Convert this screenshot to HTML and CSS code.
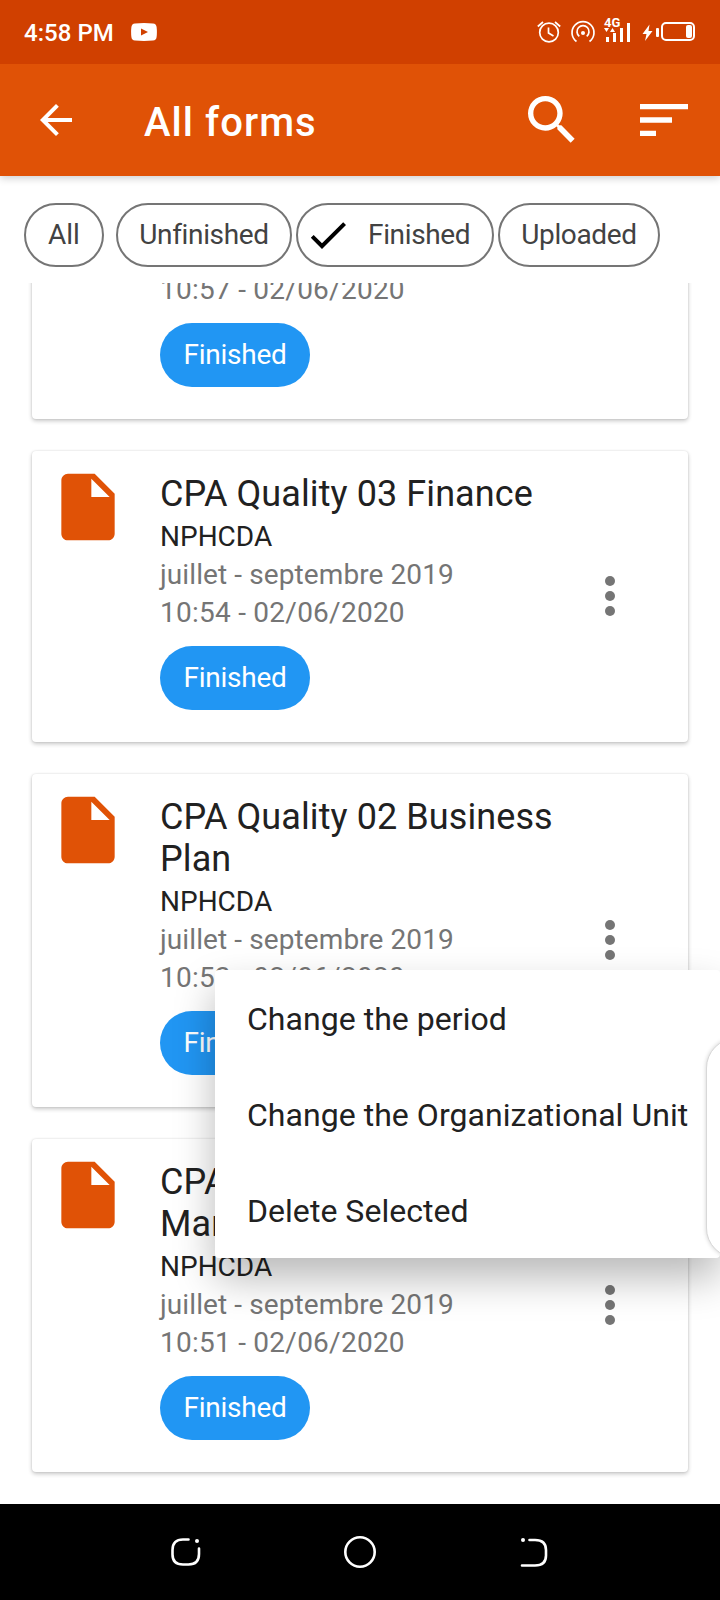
FILE: index.html
```html
<!DOCTYPE html>
<html lang="en">
<head>
<meta charset="utf-8">
<title>All forms</title>
<link rel="stylesheet" href="styles.css">
</head>
<body>
<svg class="defs" width="0" height="0">
  <symbol id="doc" viewBox="0 0 24 24"><path d="M6 2c-1.1 0-1.99.9-1.99 2L4 20c0 1.1.89 2 1.99 2H18c1.1 0 2-.9 2-2V8l-6-6H6zm7 7V3.5L18.5 9H13z"/></symbol>
  <symbol id="more" viewBox="0 0 10 40"><circle cx="5" cy="5" r="5"/><circle cx="5" cy="20" r="5"/><circle cx="5" cy="35" r="5"/></symbol>
</svg>
<div class="screen">
  <header class="status">
    <span class="clock">4:58 PM</span>
    <svg class="tube" viewBox="0 0 26 18"><path fill="#fff" d="M4 .4Q13-.4 22 .4 25.300.8 25.600 4 26.200 9 25.600 14 25.300 17.200 22 17.600 13 18.400 4 17.600.7 17.200.4 14-.2 9 .4 4 .7.8 4 .4z"/><path fill="#d04000" d="M10 5.600v6.800l7-3.400z"/></svg>
    <span class="spacer"></span>
    <svg class="tray" viewBox="530 8 170 48" fill="none" stroke="#fff" stroke-width="1.700">
      <circle cx="549" cy="32.500" r="9.300"/>
      <path d="M548.500 27.500v5.500l5 3M537.800 26.500l5.200-4.500M560.200 26.500l-5.200-4.500"/>
      <path d="M576.500 41.500a11 11 0 1 1 13 0M579.300 36.300a6 6 0 1 1 7.400 0"/>
      <circle cx="583" cy="33" r="2" fill="#fff" stroke="none"/>
      <g fill="#fff" stroke="none">
        <path d="M606 37h3v5h-3zM613 33h3v9h-3zM620 28h3v14h-3zM627 23h3v19h-3zM604 28h5l-2.500 4zM610 32h5l-2.500-4z"/>
        <path d="M649.500 24.500l-7 9.500h4l-1.500 7 7.500-10h-4z"/>
        <rect x="656" y="28" width="3" height="9" rx="1"/>
        <rect x="686" y="25" width="6" height="13" rx="2"/>
      </g>
      <text x="604" y="27" class="net">4G</text>
      <rect x="662" y="23" width="32" height="17" rx="4" stroke-width="2"/>
    </svg>
  </header>

  <div class="appbar">
    <svg class="back" viewBox="0 0 24 24"><path d="M20 11H7.830l5.590-5.590L12 4l-8 8 8 8 1.410-1.410L7.830 13H20v-2z"/></svg>
    <h1>All forms</h1>
    <span class="spacer"></span>
    <svg class="action" viewBox="0 0 24 24"><path d="M15.500 14h-.79l-.28-.27A6.471 6.471 0 0 0 16 9.500 6.500 6.500 0 1 0 9.500 16c1.610 0 3.090-.59 4.230-1.570l.27.28v.79l5 4.990L20.490 19l-4.990-5zm-6 0C7.010 14 5 11.990 5 9.500S7.010 5 9.500 5 14 7.010 14 9.500 11.990 14 9.500 14z"/></svg>
    <svg class="action" viewBox="0 0 24 24"><path d="M3 18h6v-2H3v2zM3 6v2h18V6H3zm0 7h12v-2H3v2z"/></svg>
  </div>

  <nav class="filters">
    <span class="filter filter-all">All</span>
    <span class="filter filter-unfinished">Unfinished</span>
    <span class="filter filter-finished"><svg viewBox="0 0 24 24"><path d="M9 16.170L4.830 12l-1.420 1.410L9 19 21 7l-1.410-1.410z"/></svg>Finished</span>
    <span class="filter filter-uploaded">Uploaded</span>
  </nav>

  <main class="list">
    <article class="card">
      <svg class="doc"><use href="#doc"/></svg>
      <div class="info"><h2>CPA Quality 04 Finance</h2><p class="org">NPHCDA</p><p class="period">juillet - septembre 2019</p><p>10:57 - 02/06/2020</p><span class="badge">Finished</span></div>
    </article>
    <article class="card">
      <svg class="doc"><use href="#doc"/></svg>
      <div class="info"><h2>CPA Quality 03 Finance</h2><p class="org">NPHCDA</p><p class="period">juillet - septembre 2019</p><p>10:54 - 02/06/2020</p><span class="badge">Finished</span></div>
      <svg class="more"><use href="#more"/></svg>
    </article>
    <article class="card">
      <svg class="doc"><use href="#doc"/></svg>
      <div class="info"><h2>CPA Quality 02 Business Plan</h2><p class="org">NPHCDA</p><p class="period">juillet - septembre 2019</p><p>10:53 - 02/06/2020</p><span class="badge">Finished</span></div>
      <svg class="more"><use href="#more"/></svg>
    </article>
    <article class="card">
      <svg class="doc"><use href="#doc"/></svg>
      <div class="info"><h2>CPA Quality 01 Management</h2><p class="org">NPHCDA</p><p class="period">juillet - septembre 2019</p><p>10:51 - 02/06/2020</p><span class="badge">Finished</span></div>
      <svg class="more"><use href="#more"/></svg>
    </article>
  </main>

  <footer class="navbar">
    <svg viewBox="0 0 32 32"><path d="M18.500 3.500H13Q2.500 3.500 2.500 14v4.500Q2.500 28.500 13 28.500h5.500Q29 28.500 29 18v-5.500"/><circle cx="27" cy="5" r="2"/></svg>
    <svg viewBox="0 0 32 32"><circle cx="16" cy="16" r="14.700" fill="none"/></svg>
    <svg viewBox="0 0 32 32"><path d="M11.500 4H17Q28 4 28 14v5.500Q28 29.500 17 29.500H4"/><circle cx="5" cy="4" r="2"/></svg>
  </footer>

  <div class="menu">
    <div class="menu-item">Change the period</div>
    <div class="menu-item">Change the Organizational Unit</div>
    <div class="menu-item">Delete Selected</div>
  </div>
  <div class="edge-panel"></div>
</div>
</body>
</html>
```
FILE: styles.css
```css
* { box-sizing: border-box; margin: 0; padding: 0; }
body { font-family: Roboto, sans-serif; background: #fff; }
.defs { position: absolute; }
.screen { position: relative; width: 720px; height: 1600px; display: flex; flex-direction: column; overflow: hidden; background: #fff; }
.spacer { flex: 1; }

.status { flex: none; height: 64px; background: #d04000; display: flex; align-items: center; padding: 0 20px 0 24px; z-index: 2; }
.clock { padding-top: 2px; font-size: 24px; font-weight: 500; line-height: 28px; color: #fff; letter-spacing: .05px; }
.tube { width: 26px; height: 18px; margin-left: 17px; }
.tray { width: 170px; height: 48px; }
.net { font-family: Roboto, sans-serif; font-size: 13px; font-weight: 700; fill: #fff; stroke: none; }

.appbar { flex: none; height: 112px; background: #e05206; display: flex; align-items: center; padding: 0 24px 0 32px; box-shadow: 0 2px 8px rgba(0,0,0,.2); z-index: 1; }
.appbar svg { fill: #fff; }
.appbar h1 { margin-left: 64px; padding-top: 5px; font-size: 40px; font-weight: 500; color: #fff; line-height: 48px; letter-spacing: 1.050px; }
.back { width: 48px; height: 48px; }
.action { width: 64px; height: 64px; margin-left: 48px; }

.filters { flex: none; height: 107px; display: flex; padding: 27px 24px 0; }
.filter { flex: none; height: 64px; border: 2px solid #757575; border-radius: 32px; font-size: 28px; line-height: 60px; letter-spacing: -.35px; color: #424242; display: flex; justify-content: center; }
.filter-all { width: 80px; margin-right: 12px; letter-spacing: 0; }
.filter-unfinished { width: 176px; margin-right: 4px; }
.filter-finished { width: 198px; margin-right: 4px; justify-content: flex-start; padding-left: 6px; }
.filter-finished svg { width: 48px; height: 48px; margin: 6px 16px 0 0; fill: #000; }
.filter-uploaded { width: 162px; }

.list { flex: 1; min-height: 0; overflow: hidden; display: flex; flex-direction: column; gap: 32px; padding: 0 32px; }
.card { flex: none; display: flex; padding: 22px 72px 32px 16px; background: #fff; border-radius: 4px; box-shadow: 0 2px 4px rgba(0,0,0,.22), 0 0 2px rgba(0,0,0,.12); }
.card:first-child { margin-top: -155px; }
.doc { width: 80px; height: 80px; margin-top: -6px; fill: #e05206; }
.info { width: 400px; margin-left: 32px; }
.info h2 { font-size: 36px; font-weight: 400; line-height: 42px; color: #212121; margin-bottom: 3px; letter-spacing: .09px; }
.info p { font-size: 28px; line-height: 38px; color: #757575; letter-spacing: .25px; }
.info .org { color: #212121; letter-spacing: 0; }
.info .period { letter-spacing: .1px; }
.badge { display: block; width: 150px; height: 64px; margin-top: 14px; border-radius: 32px; background: #2196f3; color: #fff; font-size: 28px; line-height: 64px; letter-spacing: -.25px; text-align: center; }
.more { width: 10px; height: 40px; margin-left: auto; margin-right: 1px; align-self: center; fill: #757575; transform: translateY(4px); }

.navbar { flex: none; height: 96px; background: #000; display: flex; justify-content: center; align-items: center; gap: 142px; }
.navbar svg { width: 32px; height: 32px; fill: none; stroke: #fff; stroke-width: 2.600; stroke-linecap: round; }
.navbar svg circle[r="2"] { fill: #fff; stroke: none; }

.menu { position: absolute; left: 215px; top: 970px; width: 505px; height: 288px; border-radius: 4px; background: #fff; box-shadow: 0 20px 40px rgba(0,0,0,.28); }
.menu-item { height: 96px; padding-left: 32px; font-size: 32px; line-height: 98px; color: #212121; letter-spacing: .04px; white-space: nowrap; }
.edge-panel { position: absolute; left: 706px; top: 1038px; width: 60px; height: 220px; border: 1px solid #d8d8d8; border-radius: 34px; background: #fff; box-shadow: 0 0 4px rgba(0,0,0,.18); }
```
